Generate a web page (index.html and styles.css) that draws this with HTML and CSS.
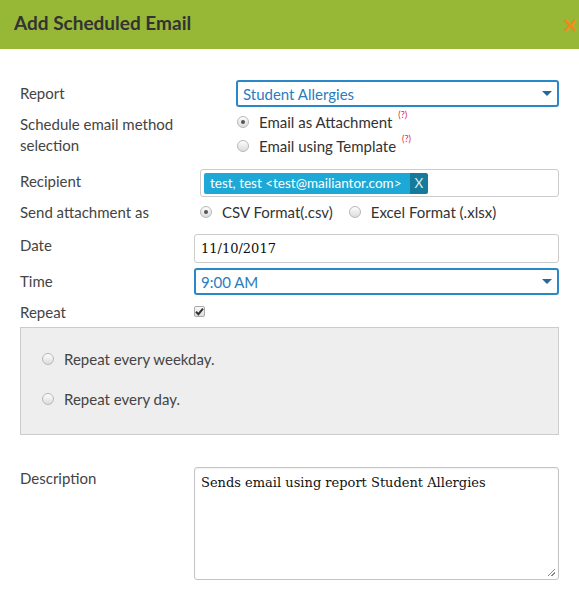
FILE: index.html
```html
<!DOCTYPE html>
<html>
<head>
<meta charset="utf-8">
<link rel="stylesheet" href="styles.css">
</head>
<body>
<div class="dialog">
  <div class="header">
    <span class="title">Add Scheduled Email</span>
    <span class="close">×</span>
  </div>
  <div class="form">
    <div class="row row-report">
      <div class="label">Report</div>
      <div class="select ctl-report"><span>Student Allergies</span><i class="arrow"></i></div>
    </div>
    <div class="row row-method">
      <div class="label label-two">Schedule email method<br>selection</div>
      <div class="options ctl-report">
        <div class="opt"><span class="radio checked"></span><span>Email as Attachment</span><sup class="help">(?)</sup></div>
        <div class="opt"><span class="radio"></span><span>Email using Template</span><sup class="help">(?)</sup></div>
      </div>
    </div>
    <div class="row row-recipient">
      <div class="label">Recipient</div>
      <div class="input tags ctl-recipient">
        <span class="tag"><span class="tag-text">test, test &lt;test@mailiantor.com&gt;</span><span class="tag-x">X</span></span>
      </div>
    </div>
    <div class="row row-attach">
      <div class="label">Send attachment as</div>
      <div class="inline-opts ctl-attach">
        <span class="radio checked"></span><span class="opt-text">CSV Format(.csv)</span>
        <span class="radio second"></span><span class="opt-text">Excel Format (.xlsx)</span>
      </div>
    </div>
    <div class="row row-date">
      <div class="label">Date</div>
      <div class="input ctl-date serif">11/10/2017</div>
    </div>
    <div class="row row-time">
      <div class="label">Time</div>
      <div class="select ctl-date"><span>9:00 AM</span><i class="arrow"></i></div>
    </div>
    <div class="row row-repeat">
      <div class="label">Repeat</div>
      <div class="ctl-date"><span class="checkbox"><svg width="9" height="9" viewBox="0 0 9 9"><path d="M1 4.8 L3.4 7.2 L8 1.6" fill="none" stroke="#333" stroke-width="2"/></svg></span></div>
    </div>
    <div class="repeat-box">
      <div class="opt box-opt"><span class="radio"></span><span>Repeat every weekday.</span></div>
      <div class="opt box-opt"><span class="radio"></span><span>Repeat every day.</span></div>
    </div>
    <div class="row row-desc">
      <div class="label">Description</div>
      <div class="textarea ctl-date serif">Sends email using report Student Allergies<span class="grip"></span></div>
    </div>
  </div>
</div>
</body>
</html>
```
FILE: styles.css
```css
html, body {
  margin: 0;
  padding: 0;
  background: #fff;
}
body {
  font-family: Lato, "Open Sans", Arial, sans-serif;
  font-size: 15px;
  color: #444;
  width: 579px;
  height: 597px;
  overflow: hidden;
}
.header {
  height: 49px;
  background: #97b737;
  display: flex;
  align-items: center;
  justify-content: space-between;
  padding-left: 14px;
}
.title {
  font-size: 19px;
  font-weight: bold;
  color: #333;
  margin-top: -4px;
}
.close {
  color: #f08a17;
  font-family: "DejaVu Sans", sans-serif;
  font-size: 21px;
  font-weight: bold;
  margin-right: 0;
  margin-top: 2px;
  line-height: 1;
}
.form {
  padding: 31px 20px 0 20px;
}
.row {
  display: flex;
  align-items: flex-start;
}
.label {
  width: 174px;
  flex: none;
  color: #444;
}
.ctl-report { margin-left: 42px; flex: 1; }
.ctl-recipient { margin-left: 6px; flex: 1; }
.ctl-attach { margin-left: 5px; flex: 1; }
.ctl-date { margin-left: 0; flex: 1; }

.row-report { height: 27px; align-items: center; }
.row-report .label { margin-top: -2px; }
.select {
  box-sizing: border-box;
  height: 27px;
  border: 2px solid #2a87c8;
  border-radius: 3px;
  color: #2b7bbf;
  display: flex;
  align-items: center;
  justify-content: space-between;
  padding: 0 5px 0 5px;
}
.arrow {
  width: 0;
  height: 0;
  border-left: 5px solid transparent;
  border-right: 5px solid transparent;
  border-top: 5px solid #28679a;
}
.row-method { margin-top: 3px; height: 48px; }
.label-two { line-height: 20.5px; padding-top: 4px; }
.options .opt { height: 24px; display: flex; align-items: center; color: #333; }
.opt .radio { margin-left: 1px; margin-right: 10px; }
.help {
  color: #e0204b;
  font-size: 9px;
  align-self: flex-start;
  margin-left: 6px;
  margin-top: -1px;
}
.radio {
  display: inline-block;
  box-sizing: border-box;
  width: 12px;
  height: 12px;
  border-radius: 50%;
  border: 1px solid #b8b8b8;
  background: linear-gradient(#fdfdfd, #dcdcdc);
  position: relative;
  flex: none;
}
.radio.checked::after {
  content: "";
  position: absolute;
  left: 3px;
  top: 3px;
  width: 4px;
  height: 4px;
  border-radius: 50%;
  background: #555;
}
.row-recipient { margin-top: 11px; height: 28px; }
.row-recipient .label { padding-top: 3px; }
.input {
  box-sizing: border-box;
  border: 1px solid #ccc;
  border-radius: 3px;
  background: #fff;
}
.tags { height: 28px; padding: 3px 3px; }
.tag {
  display: inline-flex;
  height: 21px;
  line-height: 21px;
  border-radius: 2px;
  overflow: hidden;
  color: #fff;
  font-size: 13.5px;
}
.tag-text { background: #1ea8d6; padding: 0 8px 0 6px; }
.tag-x { background: #167a9a; padding: 0 5px; color: #d8eef5; }
.row-attach { margin-top: 4px; height: 22px; align-items: center; }
.inline-opts { display: flex; align-items: center; color: #333; }
.inline-opts .radio { margin-left: 1px; margin-right: 10px; }
.inline-opts .second { margin-left: 16px; }
.serif {
  font-family: "DejaVu Serif", Georgia, serif;
  font-size: 13px;
  color: #111;
}
.row-date { margin-top: 11px; height: 29px; }
.row-date .label { padding-top: 2px; }
.row-date .input { height: 29px; line-height: 27px; padding-left: 6px; }
.row-time { margin-top: 5px; height: 27px; align-items: center; }
.row-time .label { margin-top: -2px; }
.row-repeat { margin-top: 6px; height: 20px; }
.row-repeat .label { line-height: 22px; }
.checkbox {
  display: inline-flex;
  align-items: center;
  justify-content: center;
  box-sizing: border-box;
  width: 11px;
  height: 11px;
  border: 1px solid #a9a9a9;
  border-radius: 2px;
  background: linear-gradient(#fafafa, #dedede);
  margin-top: 1px;
}
.repeat-box {
  margin-top: 6px;
  box-sizing: border-box;
  height: 108px;
  background: #eeeeee;
  border: 1px solid #cccccc;
  padding: 20px 0 0 21px;
}
.box-opt { display: flex; align-items: center; height: 22px; color: #444; }
.box-opt + .box-opt { margin-top: 18px; }
.box-opt .radio { margin-left: 0; margin-right: 10px; }
.row-desc { margin-top: 32px; }
.row-desc .label { padding-top: 2px; }
.textarea {
  box-sizing: border-box;
  height: 113px;
  border: 1px solid #c4c4c4;
  border-radius: 3px;
  padding: 5px 6px;
  line-height: 19px;
  position: relative;
  box-shadow: inset 0 1px 2px rgba(0,0,0,0.06);
}
.grip {
  position: absolute;
  right: 3px;
  bottom: 3px;
  width: 7px;
  height: 7px;
  background: linear-gradient(135deg, transparent 45%, #888 45%, #888 55%, transparent 55%, transparent 70%, #888 70%, #888 80%, transparent 80%);
}
```
